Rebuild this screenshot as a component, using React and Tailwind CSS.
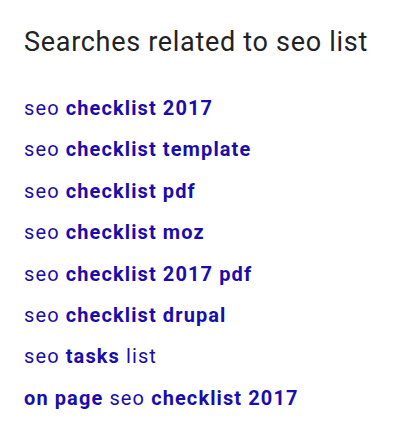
const ROWS = [
	[["seo", false], ["checklist 2017", true]],
	[["seo", false], ["checklist template", true]],
	[["seo", false], ["checklist pdf", true]],
	[["seo", false], ["checklist moz", true]],
	[["seo", false], ["checklist 2017 pdf", true]],
	[["seo", false], ["checklist drupal", true]],
	[["seo", false], ["tasks", true], ["list", false]],
	[["on page", true], ["seo", false], ["checklist 2017", true]],
];

export default function App() {
	return (
		<div className="w-[402px] h-[434px] bg-white pl-6 pt-[26px]" style={{ fontFamily: "Roboto, Arial, sans-serif" }}>
			<h3 className="text-[27px] leading-[32px] tracking-[0.7px] text-[#222222] font-normal">Searches related to seo list</h3>
			<div className="mt-[30px] flex flex-col">
				{ROWS.map((row, i) => (
					<a key={i} href="#" className="text-[20px] leading-[41.4px] tracking-[1.1px] text-[#1a0dab]">
						{row.map(([text, bold], j) => (
							<span key={j} className={bold ? "font-bold" : "font-normal"}>
								{j > 0 ? " " : ""}
								{text}
							</span>
						))}
					</a>
				))}
			</div>
		</div>
	);
}
